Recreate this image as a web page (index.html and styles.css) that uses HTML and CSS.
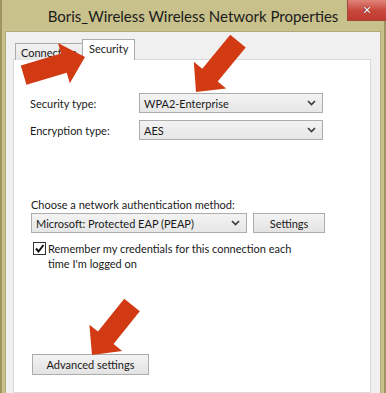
FILE: index.html
```html
<!DOCTYPE html>
<html lang="en">
<head>
  <meta charset="UTF-8" />
  <title>Boris_Wireless Wireless Network Properties</title>
  <link rel="stylesheet" href="styles.css">
</head>
<body>
  <div class="window">
    <div class="titlebar">
      <span class="title">Boris_Wireless Wireless Network Properties</span>
      <span class="close-btn">&#x2715;</span>
    </div>

    <div class="panel">
      <!-- Tabs -->
      <div class="tabs">
        <div class="tab">Connection</div>
        <div class="tab active">Security</div>
      </div>

      <div class="tab-page">
        <div class="field-row">
          <label>Security type:</label>
          <div class="select">
            <span>WPA2-Enterprise</span>
            <svg class="chevron" width="9" height="6" viewBox="0 0 9 6"><path d="M1 1 L4.5 4.5 L8 1" fill="none" stroke="#3a3a3a" stroke-width="1.6"/></svg>
          </div>
        </div>
        <div class="field-row">
          <label>Encryption type:</label>
          <div class="select">
            <span>AES</span>
            <svg class="chevron" width="9" height="6" viewBox="0 0 9 6"><path d="M1 1 L4.5 4.5 L8 1" fill="none" stroke="#3a3a3a" stroke-width="1.6"/></svg>
          </div>
        </div>

        <p class="auth-label">Choose a network authentication method:</p>
        <div class="auth-row">
          <div class="select wide">
            <span>Microsoft: Protected EAP (PEAP)</span>
            <svg class="chevron" width="9" height="6" viewBox="0 0 9 6"><path d="M1 1 L4.5 4.5 L8 1" fill="none" stroke="#3a3a3a" stroke-width="1.6"/></svg>
          </div>
          <button class="btn settings-btn">Settings</button>
        </div>

        <div class="check-row">
          <span class="checkbox">
            <svg width="11" height="11" viewBox="0 0 11 11"><path d="M2 5.5 L4.5 8.5 L9.5 2" fill="none" stroke="#111" stroke-width="2"/></svg>
          </span>
          <span class="check-text">Remember my credentials for this connection each time I'm logged on</span>
        </div>

        <button class="btn advanced-btn">Advanced settings</button>
      </div>
    </div>

    <!-- Red pointer arrows drawn over the dialog -->
    <svg class="arrows" width="386" height="393" viewBox="0 0 386 393">
      <polygon transform="translate(85 57) rotate(-16.4)" points="0,0 -22,-21 -22,-10 -64,-10 -64,10 -22,10 -22,21" />
      <polygon transform="translate(196 92) rotate(129.5)" points="0,0 -22,-21 -22,-10 -66,-10 -66,10 -22,10 -22,21" />
      <polygon transform="translate(92 355) rotate(128.7)" points="0,0 -22,-21 -22,-10 -64,-10 -64,10 -22,10 -22,21" />
    </svg>
  </div>
</body>
</html>
```

FILE: styles.css
```css
:root {
  --frame: #c9c18b;
  --panel: #f0f0f0;
  --border: #acacac;
  --arrow: #d13a12;
}

html, body {
  margin: 0;
  padding: 0;
}

body {
  font-family: 'Lato', 'Noto Sans', sans-serif;
  font-size: 11px;
  color: #1a1a1a;
}

.window {
  position: relative;
  width: 386px;
  height: 393px;
  display: flex;
  flex-direction: column;
  background: var(--frame);
  box-shadow: inset 2px 0 0 #9d9462, inset -2px 0 0 #9d9462;
  overflow: hidden;
}

.titlebar {
  height: 31px;
  display: flex;
  justify-content: center;
  align-items: center;
  position: relative;
}

.title {
  font-size: 15px;
  color: #1b1b1b;
}

.close-btn {
  position: absolute;
  top: 0;
  right: 0;
  width: 38px;
  height: 20px;
  display: flex;
  justify-content: center;
  align-items: center;
  background: linear-gradient(#e0837a, #c7463b 55%, #c03a30);
  border-left: 1px solid #9a4a3a;
  border-bottom: 1px solid #9a4a3a;
  color: #fff;
  font-family: 'DejaVu Sans', sans-serif;
  font-size: 11px;
  font-weight: 700;
  text-shadow: 0 0 1px #5a1a10, 0 0 1px #5a1a10;
}

.panel {
  flex: 1;
  margin: 0 5px;
  padding: 7px 9px 0 7px;
  background: var(--panel);
  border: 1px solid #b2aa7a;
  border-bottom: none;
  display: flex;
  flex-direction: column;
}

.tabs {
  display: flex;
  align-items: flex-end;
  height: 21px;
  padding-left: 2px;
  margin-bottom: -1px;
  position: relative;
  z-index: 1;
}

.tab {
  height: 16px;
  padding: 0 5px;
  border: 1px solid var(--border);
  border-bottom: none;
  background: linear-gradient(#f2f2f2, #e6e6e6);
  line-height: 17px;
}

.tab.active {
  height: 20px;
  line-height: 17px;
  padding: 0 6px;
  background: #fff;
  margin-left: -1px;
}

.tab-page {
  flex: 1;
  background: #fff;
  border: 1px solid #d9d9d9;
  padding: 33px 16px 0 16px;
}

.field-row {
  display: grid;
  grid-template-columns: 109px 184px;
  align-items: center;
  height: 20px;
  margin-bottom: 7px;
}

.select {
  height: 18px;
  border: 1px solid var(--border);
  background: linear-gradient(#f3f3f3, #e6e6e6);
  display: flex;
  align-items: center;
  justify-content: space-between;
  padding: 0 6px 0 4px;
}

.select.wide {
  width: 204px;
  margin-left: 1px;
}

.auth-label {
  margin: 57px 0 0 1px;
  line-height: 15px;
}

.auth-row {
  display: flex;
  gap: 6px;
  height: 20px;
  margin-top: 1px;
}

.btn {
  font-family: inherit;
  font-size: inherit;
  color: #1a1a1a;
  border: 1px solid var(--border);
  background: linear-gradient(#f3f3f3, #e3e3e3);
  padding: 0;
  border-radius: 0;
}

.settings-btn {
  width: 72px;
  height: 20px;
}

.check-row {
  display: flex;
  align-items: flex-start;
  margin-top: 9px;
  padding-left: 3px;
}

.checkbox {
  width: 11px;
  height: 11px;
  border: 1px solid #333;
  background: #fff;
  display: flex;
  flex-shrink: 0;
  margin-right: 2px;
}

.check-text {
  width: 245px;
  line-height: 15px;
  margin-top: -1px;
}

.advanced-btn {
  display: block;
  width: 117px;
  height: 21px;
  margin: 83px 0 0 2px;
}

.arrows {
  position: absolute;
  top: 0;
  left: 0;
  z-index: 2;
  pointer-events: none;
}

.arrows polygon {
  fill: var(--arrow);
}
```
